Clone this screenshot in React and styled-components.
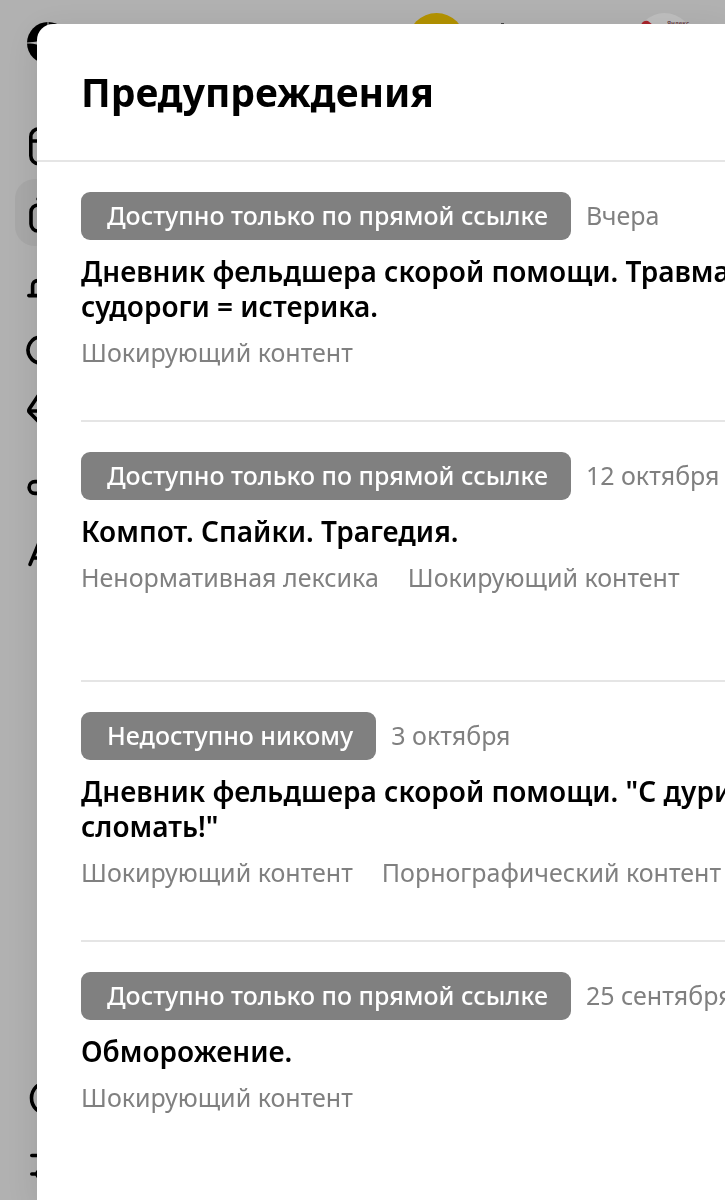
import React from "react";
import styled, { createGlobalStyle } from "styled-components";

const GlobalStyles = createGlobalStyle`
  * {
    box-sizing: border-box;
  }
  body {
    margin: 0;
    background: #b1b1b1;
    font-family: "Noto Sans", "Open Sans", sans-serif;
    color: #000;
  }
  h1, h2, p, ul {
    margin: 0;
    padding: 0;
  }
  ul {
    list-style: none;
  }
`;

const PageStyles = styled.div`
  display: flex;
  height: 100vh;
  overflow: hidden;
`;

const SidebarStyles = styled.aside`
  display: flex;
  flex-direction: column;
  width: 120px;
  padding: 22px 15px 2px;
  .logo {
    display: block;
    width: 42px;
    height: 42px;
    margin: 0 0 48px 12px;
  }
  .bottom {
    margin-top: auto;
  }
`;

const NavButton = styled.button`
  display: flex;
  align-items: center;
  width: 100%;
  height: 67px;
  padding: 0 12px;
  border: 0;
  border-radius: 20px;
  background: ${(props) => (props.$active ? "#a8a8a8" : "transparent")};
  color: #000;
  svg {
    width: 40px;
    height: 40px;
    fill: none;
    stroke: currentColor;
    stroke-width: 3.6;
    stroke-linecap: round;
    stroke-linejoin: round;
    overflow: visible;
  }
`;

const TopBarStyles = styled.header`
  display: flex;
  flex: 1;
  justify-content: flex-end;
  padding: 13px 32px 0;
  svg {
    height: 57px;
  }
`;

const OverlayStyles = styled.div`
  position: fixed;
  inset: 0;
  display: flex;
  padding: 24px 0 0 37px;
  overflow: hidden;
`;

const ModalStyles = styled.section`
  flex: 1;
  min-width: 0;
  background: #fff;
  border-radius: 16px 0 0 0;
  box-shadow: 0 8px 32px rgba(0, 0, 0, 0.1);
`;

const ModalHeader = styled.div`
  display: flex;
  align-items: center;
  height: 138px;
  padding: 0 44px;
  border-bottom: 2px solid #e5e5e5;
  h1 {
    font-size: 39px;
    line-height: 48px;
    font-weight: 700;
  }
`;

const WarningList = styled.ul`
  padding-left: 44px;
  overflow: hidden;
  white-space: nowrap;
`;

const WarningItem = styled.li`
  min-height: 260px;
  padding-top: 30px;
  border-bottom: 2px solid #e5e5e5;
  &:last-child {
    border-bottom: 0;
  }
  h2 {
    margin-top: 14px;
    font-size: 28px;
    line-height: 35px;
    font-weight: 600;
    white-space: pre;
  }
`;

const StatusRow = styled.div`
  display: flex;
  align-items: baseline;
  gap: 15px;
`;

const Badge = styled.span`
  height: 48px;
  padding: 0 23px 0 26px;
  border-radius: 9px;
  background: #808080;
  color: #fff;
  font-size: 25px;
  line-height: 46px;
  font-weight: 500;
`;

const MutedText = styled.span`
  color: #808080;
  font-size: 25px;
  line-height: 32px;
`;

const TagRow = styled.div`
  display: flex;
  gap: 29px;
  margin-top: 12px;
`;

const navItems = [
  {
    label: "Главная",
    icon: (
      <>
        <rect x="3.8" y="2.8" width="33" height="35" rx="8" />
        <path d="M4 15h32" />
      </>
    ),
  },
  {
    label: "Студия",
    active: true,
    icon: (
      <>
        <rect x="4" y="12" width="32" height="26" rx="7" />
        <path d="M11 6h18" />
      </>
    ),
  },
  {
    label: "Уведомления",
    icon: <path d="M1.8 35.6h36M5.6 35V26c0-4 2-5.2 6-5.6" />,
  },
  {
    label: "Поиск",
    icon: <path d="M14 10a13 13 0 1 0 .1 0M24 33l8 7" />,
  },
  {
    label: "Подписки",
    icon: <path d="M11 2 2.6 14.5q-1.6 2.5 0 4L12 28M3 17h11" />,
  },
  {
    label: "Ссылки",
    icon: <path d="M12 20.6H8a5.9 5.9 0 0 0 0 11.8h4" />,
  },
  {
    label: "Шрифты",
    icon: <path d="M3 36.4 11.5 16 20 36.4M6 30h11" />,
  },
];

const bottomItems = [
  { label: "Справка", icon: <circle cx="20.5" cy="20" r="16" /> },
  {
    label: "Настройки",
    icon: (
      <>
        <path d="M4.8 10.500H30M4.8 29H10M18 29h17" />
        <circle cx="14" cy="29" r="4" />
      </>
    ),
  },
];

const warnings = [
  {
    status: "Доступно только по прямой ссылке",
    date: "Вчера",
    title: "Дневник фельдшера скорой помощи. Травма\nсудороги = истерика.",
    tags: ["Шокирующий контент"],
  },
  {
    status: "Доступно только по прямой ссылке",
    date: "12 октября",
    title: "Компот. Спайки. Трагедия.",
    tags: ["Ненормативная лексика", "Шокирующий контент"],
  },
  {
    status: "Недоступно никому",
    date: "3 октября",
    title: 'Дневник фельдшера скорой помощи. "С дури\nсломать!"',
    tags: ["Шокирующий контент", "Порнографический контент"],
  },
  {
    status: "Доступно только по прямой ссылке",
    date: "25 сентября",
    title: "Обморожение.",
    tags: ["Шокирующий контент"],
  },
];

const NavItem = ({ item }) => {
  return (
    <NavButton type="button" aria-label={item.label} $active={item.active}>
      <svg viewBox="0 0 40 40">{item.icon}</svg>
    </NavButton>
  );
};

const Sidebar = () => {
  return (
    <SidebarStyles>
      <svg className="logo" viewBox="0 0 42 42">
        <circle cx="21" cy="21" r="21" />
        <path
          d="M20.5 0C20.4 15 18 20.2 0 20.4v1.2C18 21.800 20.400 27 20.500 42h1C21.600 27 24 21.800 42 21.600v-1.200C24 20.200 21.600 15 21.500 0z"
          fill="#b1b1b1"
        />
      </svg>
      <nav>
        {navItems.map((item) => (
          <NavItem key={item.label} item={item}></NavItem>
        ))}
      </nav>
      <div className="bottom">
        {bottomItems.map((item) => (
          <NavItem key={item.label} item={item}></NavItem>
        ))}
      </div>
    </SidebarStyles>
  );
};

const TopBar = () => {
  return (
    <TopBarStyles>
      <svg width="57" viewBox="0 0 57 57">
        <circle cx="28.5" cy="28.5" r="28.5" fill="#b39200" />
      </svg>
      {/* only the tip of this mark shows above the dialog */}
      <svg width="171" viewBox="0 0 171 57">
        <path d="M36 10h3v8h-3z" fill="#444" />
      </svg>
      <svg width="57" viewBox="0 0 57 57">
        <circle cx="28.5" cy="28.5" r="28.5" fill="#bebebe" />
        <path d="M5 12q2-5 7-4l5 4v5H5z" fill="#a8232b" />
        <text x="31" y="12" fontSize="6" fontWeight="700" fill="#6b4549">
          Яндекс
        </text>
      </svg>
    </TopBarStyles>
  );
};

const Warning = ({ data }) => {
  return (
    <WarningItem>
      <StatusRow>
        <Badge>{data.status}</Badge>
        <MutedText>{data.date}</MutedText>
      </StatusRow>
      <h2>{data.title}</h2>
      <TagRow>
        {data.tags.map((tag) => (
          <MutedText key={tag}>{tag}</MutedText>
        ))}
      </TagRow>
    </WarningItem>
  );
};

const App = () => {
  return (
    <>
      <GlobalStyles />
      <PageStyles>
        <Sidebar></Sidebar>
        <TopBar></TopBar>
      </PageStyles>
      <OverlayStyles>
        <ModalStyles role="dialog" aria-labelledby="warnings-title">
          <ModalHeader>
            <h1 id="warnings-title">Предупреждения</h1>
          </ModalHeader>
          <WarningList>
            {warnings.map((item, index) => (
              <Warning key={index} data={item}></Warning>
            ))}
          </WarningList>
        </ModalStyles>
      </OverlayStyles>
    </>
  );
};

export default App;
